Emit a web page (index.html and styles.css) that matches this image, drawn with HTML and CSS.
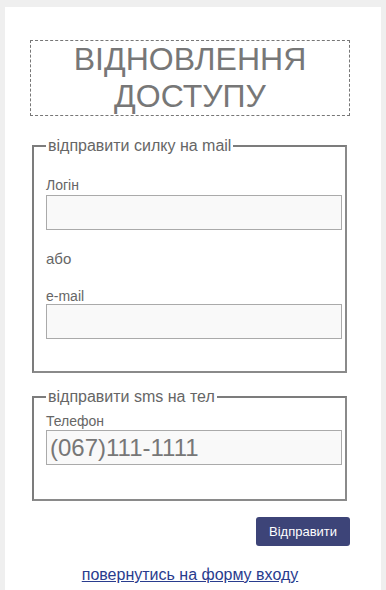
FILE: index.html
```html
<!DOCTYPE html>
<html lang="uk">
<head>
  <meta charset="UTF-8">
  <title>Відновлення доступу</title>
  <link rel="stylesheet" href="styles.css">
</head>
<body>
  <div class="container">
    <h1 class="titulo">ВІДНОВЛЕННЯ ДОСТУПУ</h1>

    <fieldset class="grupo">
      <legend>відправити силку на mail</legend>
      <label for="login" class="rotulo">Логін</label>
      <input type="text" id="login" class="campo">
      <div class="ou">або</div>
      <label for="email" class="rotulo rotulo-email">e-mail</label>
      <input type="text" id="email" class="campo">
    </fieldset>

    <fieldset class="grupo grupo-sms">
      <legend>відправити sms на тел</legend>
      <label for="telefone" class="rotulo rotulo-tel">Телефон</label>
      <input type="text" id="telefone" class="campo campo-tel" placeholder="(067)111-1111">
    </fieldset>

    <div class="acoes">
      <button type="button" class="enviar">Відправити</button>
    </div>

    <div class="voltar">
      <a href="#">повернутись на форму входу</a>
    </div>
  </div>
</body>
</html>
```

FILE: styles.css
```css
body {
  font-family: "Liberation Sans", Arial, sans-serif;
  background-color: #efefef;
  margin: 0;
  padding: 0;
}

.container {
  box-sizing: border-box;
  margin: 7px 5px 0;
  background-color: #fff;
  padding: 33px 31px 0 25px;
  min-height: 583px;
}

.titulo {
  margin: 0;
  border: 1px dashed #777;
  color: #777;
  font-size: 32px;
  font-weight: normal;
  line-height: 37px;
  text-align: center;
}

.grupo {
  margin: 21px 3px 0 2px;
  padding: 0 3px 32px 12px;
  border: 2px solid #7c7c7c;
  border-right-color: #8a8a8a;
  border-bottom-color: #8a8a8a;
}

.grupo legend {
  padding: 0 2px;
  color: #666;
  font-size: 16px;
  line-height: 17px;
}

.rotulo {
  display: block;
  margin-top: 23px;
  margin-bottom: 2px;
  color: #666;
  font-size: 14px;
  line-height: 16px;
}

.rotulo-email {
  margin-top: 21px;
  margin-bottom: 0;
}

.campo {
  display: block;
  width: 100%;
  height: 35px;
  box-sizing: border-box;
  margin: 0;
  padding: 0 3px;
  background-color: #f9f9f9;
  border: 1px solid #aaa;
  font-family: "Liberation Sans", Arial, sans-serif;
  font-size: 16px;
  color: #666;
}

.ou {
  margin-top: 20px;
  color: #666;
  font-size: 15px;
  line-height: 17px;
}

.grupo-sms {
  margin-top: 15px;
  padding-bottom: 34px;
}

.rotulo-tel {
  margin-top: 8px;
  margin-bottom: 1px;
}

.campo-tel {
  font-size: 24px;
}

.campo-tel::placeholder {
  color: #777;
}

.acoes {
  margin-top: 16px;
  text-align: right;
}

.enviar {
  width: 94px;
  height: 29px;
  font-family: "Liberation Sans", Arial, sans-serif;
  font-size: 13px;
  color: #fff;
  background-color: #3d4478;
  border: none;
  border-radius: 3px;
  cursor: pointer;
}

.voltar {
  margin-top: 20px;
  text-align: center;
  font-size: 16px;
}

.voltar a {
  color: #293c8e;
}
```
